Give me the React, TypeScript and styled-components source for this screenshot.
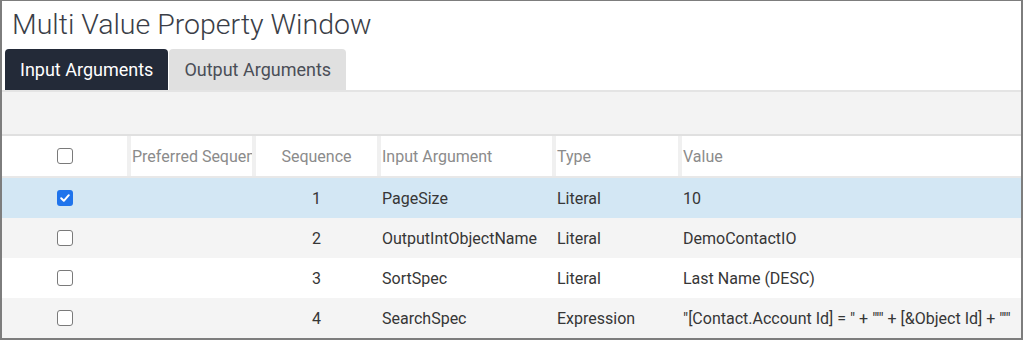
import React from "react";
import styled, { createGlobalStyle } from "styled-components";

const Global = createGlobalStyle`
  html, body { margin: 0; padding: 0; background: #ffffff; }
  body { font-family: Roboto, "Liberation Sans", Arial, sans-serif; }
`;

const Frame = styled.div`
  box-sizing: border-box;
  width: 1023px;
  height: 340px;
  border: 2px solid #7d7d7d;
  border-top-width: 1px;
  background: #ffffff;
  overflow: hidden;
  display: flex;
  flex-direction: column;
`;

const Title = styled.h1`
  margin: 0;
  height: 48px;
  padding-left: 10px;
  font-size: 28.5px;
  line-height: 47px;
  font-weight: 300;
  color: #3a3e47;
  white-space: nowrap;
`;

const TabBar = styled.div`
  display: flex;
  gap: 1px;
  padding-left: 3px;
  height: 41px;
  border-bottom: 2px solid #e4e4e4;
`;

const Tab = styled.div<{ $active?: boolean }>`
  display: flex;
  align-items: center;
  padding: 0 15px;
  font-size: 18px;
  border-radius: 4px 4px 0 0;
  background: ${(p) => (p.$active ? "#232a38" : "#e0e0e0")};
  color: ${(p) => (p.$active ? "#ffffff" : "#4a4e57")};
  white-space: nowrap;
`;

const Band = styled.div`
  height: 42px;
  background: #f3f3f3;
  border-bottom: 2px solid #e0e0e0;
`;

const Row = styled.div<{ $bg: string; $header?: boolean }>`
  display: grid;
  grid-template-columns: 125px 125px 125px 175px 126px 1fr;
  height: 40px;
  background: ${(p) => p.$bg};
  border-bottom: ${(p) => (p.$header ? "2px solid #e8e8e8" : "none")};
  flex-shrink: 0;
`;

const Cell = styled.div<{ $sep?: boolean; $center?: boolean; $header?: boolean }>`
  box-sizing: border-box;
  display: flex;
  align-items: center;
  justify-content: ${(p) => (p.$center ? "center" : "flex-start")};
  border-left: ${(p) => (p.$sep ? "4px solid #f0f0f0" : "4px solid transparent")};
  padding-left: ${(p) => (p.$center ? "0" : "1px")};
  font-size: 16px;
  color: ${(p) => (p.$header ? "#8b8b8b" : "#363636")};
  white-space: nowrap;
  overflow: hidden;
`;

const CheckCell = styled.div`
  display: flex;
  align-items: center;
  justify-content: center;
  padding-left: 1px;
`;

const Box = styled.span<{ $checked?: boolean }>`
  box-sizing: border-box;
  width: 16px;
  height: 16px;
  border-radius: 3px;
  border: ${(p) => (p.$checked ? "none" : "1.5px solid #7a7a7a")};
  background: ${(p) => (p.$checked ? "#1f74ec" : "#ffffff")};
  display: flex;
  align-items: center;
  justify-content: center;
`;

const Checkbox = ({ checked }: { checked?: boolean }) => (
  <Box $checked={checked}>
    {checked && (
      <svg width="12" height="12" viewBox="0 0 12 12">
        <path d="M2.2 6.3 L4.8 8.8 L9.8 3.2" fill="none" stroke="#fff" strokeWidth="2" strokeLinecap="round" strokeLinejoin="round" />
      </svg>
    )}
  </Box>
);

const rows = [
  { seq: "1", name: "PageSize", type: "Literal", value: "10", checked: true, bg: "#d3e7f4" },
  { seq: "2", name: "OutputIntObjectName", type: "Literal", value: "DemoContactIO", bg: "#f4f4f4" },
  { seq: "3", name: "SortSpec", type: "Literal", value: "Last Name (DESC)", bg: "#ffffff" },
  {
    seq: "4",
    name: "SearchSpec",
    type: "Expression",
    value: "\"[Contact.Account Id] = \" + \"'\" + [&Object Id] + \"'\"",
    bg: "#f4f4f4",
  },
];

export default function App() {
  return (
    <>
      <Global />
      <Frame>
        <Title>Multi Value Property Window</Title>
        <TabBar>
          <Tab $active>Input Arguments</Tab>
          <Tab>Output Arguments</Tab>
        </TabBar>
        <Band />
        <Row $bg="#ffffff" $header>
          <CheckCell>
            <Checkbox />
          </CheckCell>
          <Cell $sep $header>Preferred Sequence</Cell>
          <Cell $sep $header $center>Sequence</Cell>
          <Cell $sep $header>Input Argument</Cell>
          <Cell $sep $header>Type</Cell>
          <Cell $sep $header>Value</Cell>
        </Row>
        {rows.map((r) => (
          <Row key={r.seq} $bg={r.bg}>
            <CheckCell>
              <Checkbox checked={r.checked} />
            </CheckCell>
            <Cell />
            <Cell $center>{r.seq}</Cell>
            <Cell>{r.name}</Cell>
            <Cell>{r.type}</Cell>
            <Cell>{r.value}</Cell>
          </Row>
        ))}
      </Frame>
    </>
  );
}
